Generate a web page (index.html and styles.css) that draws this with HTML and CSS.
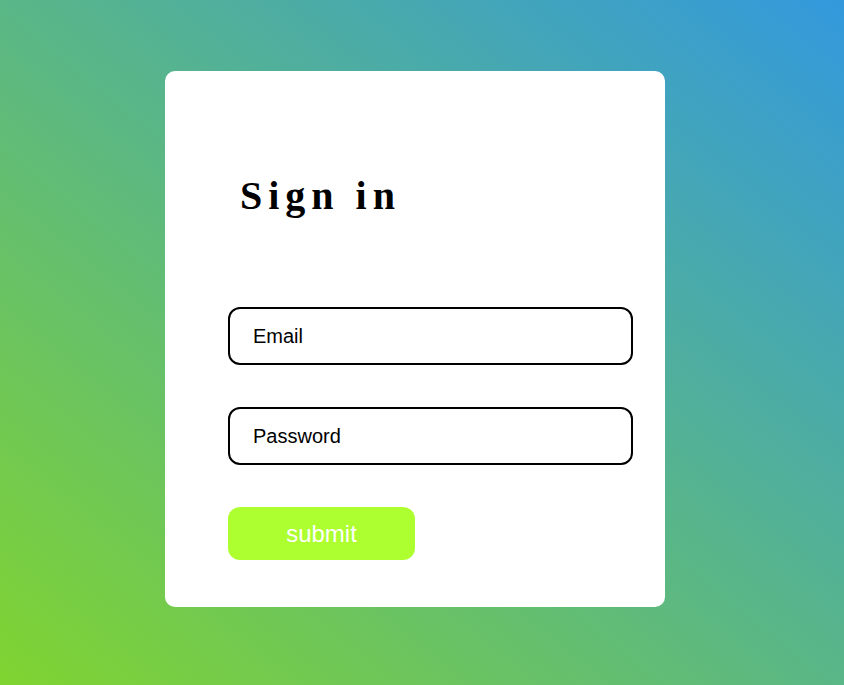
FILE: index.html
```html
<!DOCTYPE html>
<html>
<head>
<meta charset="utf-8">
<link rel="stylesheet" href="styles.css">
</head>
<body>
<div class="card">
  <h1 class="title">Sign in</h1>
  <form class="form">
    <input class="field" type="text" placeholder="Email">
    <input class="field" type="password" placeholder="Password">
    <button class="submit" type="button">submit</button>
  </form>
</div>
</body>
</html>
```

FILE: styles.css
```css
html, body {
  margin: 0;
  padding: 0;
  height: 100%;
}
body {
  background: linear-gradient(to top right, #80d430, #3399dd);
  overflow: hidden;
  padding-top: 71px;
  padding-left: 165px;
  box-sizing: border-box;
}
.card {
  width: 500px;
  height: 536px;
  background: #fff;
  border-radius: 10px;
  box-sizing: border-box;
  padding: 102px 32px 0 63px;
}
.title {
  margin: 0 0 88px 12px;
  font-family: "Liberation Serif", "Times New Roman", serif;
  font-weight: bold;
  font-size: 40px;
  line-height: 46px;
  letter-spacing: 6px;
  color: #000;
}
.form {
  display: flex;
  flex-direction: column;
  align-items: flex-start;
}
.field {
  width: 405px;
  height: 58px;
  box-sizing: border-box;
  border: 2px solid #000;
  border-radius: 12px;
  padding: 0 0 0 23px;
  margin: 0 0 42px 0;
  font-family: "Liberation Sans", Arial, sans-serif;
  font-size: 20px;
  color: #000;
  background: #fff;
  outline: none;
}
.field::placeholder {
  color: #000;
  opacity: 1;
}
.submit {
  width: 187px;
  height: 53px;
  border: none;
  border-radius: 12px;
  background: #adff2f;
  color: #fff;
  font-family: "Liberation Sans", Arial, sans-serif;
  font-size: 24px;
  padding: 0;
  cursor: pointer;
}
```
